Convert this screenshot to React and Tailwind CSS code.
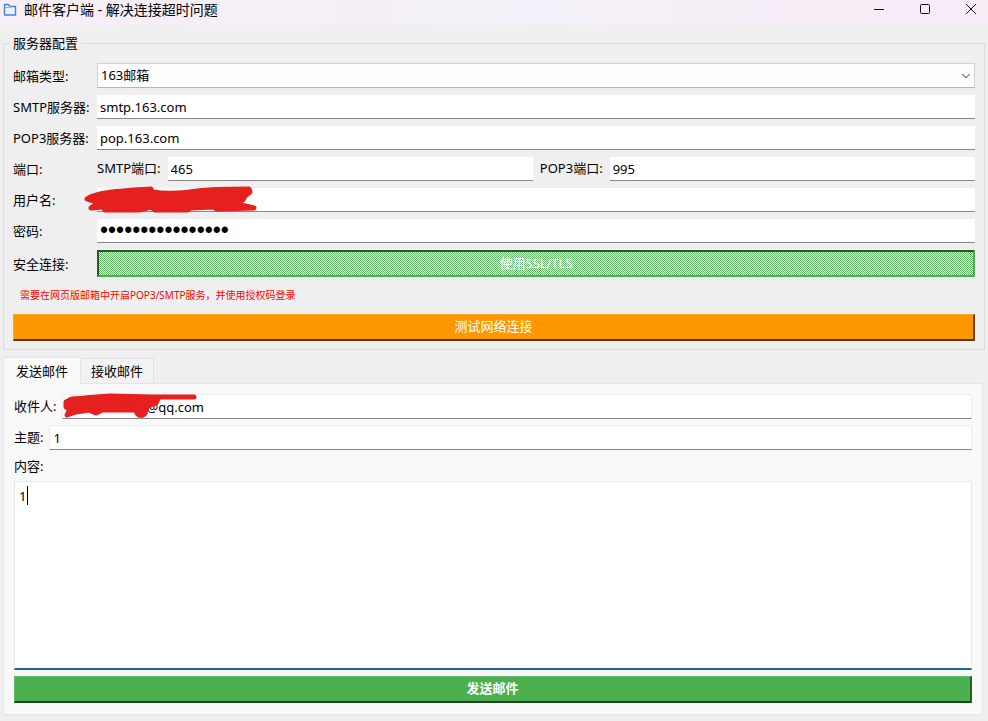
import React, { useState } from "react";
import { ChevronDown } from "lucide-react";

const line =
  "h-6 w-full min-w-0 border-b border-[#868686] bg-white px-[3px] text-[13px] leading-5 text-black outline-none";
const boxed =
  "h-[25px] w-full min-w-0 border border-[#ececec] border-b-[#868686] bg-white px-[3px] text-[13px] leading-5 text-black outline-none";

function TitleBar() {
  return (
    <header className="flex h-[25px] items-start justify-between bg-linear-to-r from-[#f8eef6] via-[#f3f0f8] to-[#f8ecf7]">
      <div className="flex h-5 items-center gap-[7px] pl-[3px]">
        <svg width="14" height="14" viewBox="0 0 14 14" fill="none">
          <path d="M1.5 1.5h4l1.5 2h5.5v8.5h-11z" fill="#e6f3fd" stroke="#4a7fe0" strokeWidth="1.4" strokeLinejoin="round" />
          <path d="M2 4.5h4.5L8 3.5" stroke="#7fb2ee" />
        </svg>
        <h1 className="text-[14px] leading-5">邮件客户端 - 解决连接超时问题</h1>
      </div>
      <div className="flex h-[18px] items-center gap-[30px] pr-[9px]">
        <button aria-label="最小化" className="flex size-4 items-center justify-center">
          <svg width="12" height="12" viewBox="0 0 12 12" stroke="#111">
            <path d="M1 6.5h10" />
          </svg>
        </button>
        <button aria-label="最大化" className="flex size-4 items-center justify-center">
          <svg width="12" height="12" viewBox="0 0 12 12" fill="none" stroke="#111">
            <rect x="1.5" y="1.5" width="9" height="9" rx="1" />
          </svg>
        </button>
        <button aria-label="关闭" className="flex size-4 items-center justify-center">
          <svg width="12" height="12" viewBox="0 0 12 12" stroke="#111">
            <path d="M1 1l10 10M11 1L1 11" />
          </svg>
        </button>
      </div>
    </header>
  );
}

function Row({ label, id, children }) {
  return (
    <div className="flex items-center">
      <label htmlFor={id} className="w-[84px] shrink-0 whitespace-nowrap leading-5">
        {label}
      </label>
      <div className="relative flex min-w-0 flex-1 items-center">{children}</div>
    </div>
  );
}

function ServerConfig() {
  const [ssl, setSsl] = useState(true);
  return (
    <fieldset className="mx-[3px] mt-2 min-w-0 border border-[#dcdcdc] px-[9px] pb-2">
      <legend className="-ml-[3px] px-[3px] leading-5">服务器配置</legend>
      <div className="mt-[10px] flex flex-col gap-[7px]">
        <Row label="邮箱类型:" id="type">
          <select
            id="type"
            className="h-[25px] w-full appearance-none border border-[#d0d0d0] border-b-[#b4b4b4] bg-[#fdfdfd] px-[3px] text-[13px] outline-none"
          >
            <option>163邮箱</option>
            <option>QQ邮箱</option>
          </select>
          <ChevronDown size={14} strokeWidth={1.8} className="pointer-events-none absolute right-[2px] text-[#555]" />
        </Row>
        <Row label="SMTP服务器:" id="smtp">
          <input id="smtp" className={line} defaultValue="smtp.163.com" />
        </Row>
        <Row label="POP3服务器:" id="pop">
          <input id="pop" className={line} defaultValue="pop.163.com" />
        </Row>
        <Row label="端口:" id="smtp-port">
          <div className="flex flex-1 items-center gap-[7px]">
            <label htmlFor="smtp-port" className="shrink-0">SMTP端口:</label>
            <input id="smtp-port" className={line} defaultValue="465" />
            <label htmlFor="pop-port" className="shrink-0">POP3端口:</label>
            <input id="pop-port" className={line} defaultValue="995" />
          </div>
        </Row>
        <Row label="用户名:" id="user">
          <input id="user" className={line} />
          <svg className="absolute -top-2 -left-4" width="180" height="34" viewBox="0 0 180 34" fill="none">
            <path
              d="M6 19C14 13 34 11 70 9L71 12C86 14 104 13 116 11C132 9 150 9 168 9L169 12L164 16L162 20L155 22L160 25L173 28L136 29L132 27L110 28L106 30L74 30L70 27L58 30L24 30L22 27L10 28L18 22L9 20Z"
              fill="#e61f1f"
              stroke="#e61f1f"
              strokeWidth="5"
              strokeLinejoin="round"
            />
          </svg>
        </Row>
        <Row label="密码:" id="pass">
          <input
            id="pass"
            type="password"
            className="h-6 w-full border-b border-[#868686] bg-white px-[3px] font-['Liberation_Sans'] text-[23px] leading-5 outline-none"
            defaultValue="abcdefghijklmnop"
          />
        </Row>
        <Row label="安全连接:" id="ssl">
          <button
            id="ssl"
            aria-pressed={ssl}
            onClick={() => setSsl(!ssl)}
            className="h-[27px] w-full border-2 border-t-[#265828] border-r-[#4caf50] border-b-[#4caf50] border-l-[#265828] bg-[repeating-conic-gradient(#63b867_0_25%,#e6f3e6_0_50%)] bg-[length:2px_2px] text-[13px] text-white"
          >
            使用SSL/TLS
          </button>
        </Row>
      </div>
      <p className="mt-2 px-[7px] text-[10px] leading-5 text-[#ff0000]">
        需要在网页版邮箱中开启POP3/SMTP服务，并使用授权码登录
      </p>
      <button className="mt-[9px] h-[27px] w-full border-t border-r-2 border-b-2 border-l border-t-[#ffa526] border-r-[#704300] border-b-[#5c3700] border-l-[#ffa526] bg-[#ff9800] text-[13px] text-white">
        测试网络连接
      </button>
    </fieldset>
  );
}

function SendForm() {
  return (
    <form className="flex flex-1 flex-col" onSubmit={(e) => e.preventDefault()}>
      <div className="relative flex items-center gap-1.5">
        <label htmlFor="to" className="shrink-0">收件人:</label>
        <input id="to" className={`${boxed} pl-[75px]`} defaultValue="q@qq.com" />
        <svg className="absolute -top-1 left-12" width="140" height="32" viewBox="0 0 140 32" fill="none">
          <path
            d="M8 10C20 8 34 7 48 6L90 7L132 7"
            stroke="#e61f1f"
            strokeWidth="5"
            strokeLinecap="round"
          />
          <path
            d="M4 12L10 9L46 7L96 9L94 13L86 16L83 21L72 20L40 20L34 23L27 20L14 22L5 25L8 19L4 17Z"
            fill="#e61f1f"
            stroke="#e61f1f"
            strokeWidth="5"
            strokeLinejoin="round"
          />
          <circle cx="79" cy="21" r="7" fill="#e61f1f" />
        </svg>
      </div>
      <div className="mt-1.5 flex items-center gap-1.5">
        <label htmlFor="subject" className="shrink-0">主题:</label>
        <input id="subject" className={boxed} defaultValue="1" />
      </div>
      <label htmlFor="body" className="mt-1.5 leading-5">内容:</label>
      <div className="relative mt-[5px] flex min-h-32 flex-1">
        <textarea
          id="body"
          className="flex-1 resize-none border border-b-2 border-[#e8e8e8] border-b-[#1f6391] bg-white px-1 py-1 text-[13px] leading-5 caret-transparent outline-none"
          defaultValue="1"
        />
        <span className="pointer-events-none absolute top-[5px] left-[13px] h-[19px] w-px bg-black" />
      </div>
      <button className="mt-1.5 h-[27px] border-t border-r-2 border-b-2 border-l border-t-[#67bb6a] border-r-[#27602a] border-b-[#1e4620] border-l-[#67bb6a] bg-[#4caf50] text-[13px] font-bold text-white">
        发送邮件
      </button>
    </form>
  );
}

export default function App() {
  const [tab, setTab] = useState("send");
  const active = "relative -mb-px h-[27px] border border-b-0 border-[#e5e5e5] bg-[#f9f9f9] px-3 leading-5";
  const idle = "h-[25px] border border-b-0 border-l-0 border-[#e0e0e0] bg-[#f2f2f2] px-[10px] leading-5";
  return (
    <div className="flex min-h-screen flex-col bg-[#efefef] font-['Noto_Sans','Noto_Sans_CJK_SC',sans-serif] text-[13px] text-black">
      <TitleBar />
      <ServerConfig />
      <main className="mr-[5px] mb-1.5 ml-[3px] mt-[7px] flex flex-1 flex-col">
        <div role="tablist" className="flex items-end">
          <button role="tab" aria-selected={tab === "send"} onClick={() => setTab("send")} className={tab === "send" ? active : idle}>
            发送邮件
          </button>
          <button role="tab" aria-selected={tab === "receive"} onClick={() => setTab("receive")} className={tab === "receive" ? active : idle}>
            接收邮件
          </button>
        </div>
        <section className="flex flex-1 flex-col border border-[#e5e5e5] bg-[#f9f9f9] px-2.5 pt-2.5 pb-[11px]">
          {tab === "send" && <SendForm />}
        </section>
      </main>
    </div>
  );
}
